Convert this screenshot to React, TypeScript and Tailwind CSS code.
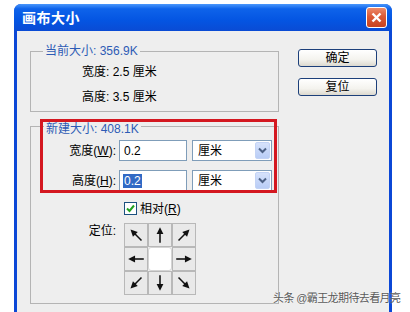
import { ReactNode } from "react"

const font = { fontFamily: '"Liberation Sans", "Noto Sans CJK SC", sans-serif' }

// arrow pointing right, rotated by angle around the cell centre
function Arrow({ angle }: { angle: number }) {
  return (
    <svg width="22" height="22" viewBox="0 0 24 24">
      <g transform={`rotate(${angle} 12 12)`}>
        <line x1="3.5" y1="12" x2="15" y2="12" stroke="#111" strokeWidth="1.7" />
        <polygon points="20.5,12 13,8.3 13,15.7" fill="#111" />
      </g>
    </svg>
  )
}

function Cell({ children, center }: { children?: ReactNode; center?: boolean }) {
  return (
    <div
      className={
        center
          ? "w-[24px] h-[24px] bg-white border border-[#d4d4d4] rounded-[3px]"
          : "w-[24px] h-[24px] bg-[#e9e9e9] border border-[#b8b8b8] flex items-center justify-center"
      }
    >
      {children}
    </div>
  )
}

function UnitSelect() {
  return (
    <div className="ml-[5px] w-[80px] h-[21px] bg-white border border-[#7f9db9] flex items-center">
      <span className="pl-[5px] flex-1 text-[12px] text-black leading-[14px]">厘米</span>
      <div className="mr-[1px] w-[15px] h-[17px] rounded-[2px] bg-[linear-gradient(180deg,#d6e2fb_0%,#b9cdf6_100%)] border border-[#c3d3f5] flex items-center justify-center">
        <svg width="9" height="7" viewBox="0 0 9 7">
          <polyline points="1,1.5 4.5,5 8,1.5" fill="none" stroke="#4d6185" strokeWidth="2" />
        </svg>
      </div>
    </div>
  )
}

function XpButton({ label }: { label: string }) {
  return (
    <div className="w-[79px] h-[18px] rounded-[3px] border border-[#1c3f7a] bg-[linear-gradient(180deg,#ffffff_0%,#f4f3ee_60%,#dcd9cf_100%)] flex items-center justify-center text-[12px] leading-[14px] text-black">
      {label}
    </div>
  )
}

export default function App() {
  return (
    <div className="relative w-[410px] h-[312px] bg-white overflow-hidden pl-[14px] pt-[4px]" style={font}>
      <div className="w-[378px] h-[320px] rounded-t-[7px] bg-[#0b47d6] flex flex-col">
        {/* title bar */}
        <div className="h-[27px] rounded-t-[7px] bg-[linear-gradient(180deg,#4a97fb_0%,#0e63ea_18%,#0455e2_60%,#0a4bd4_100%)] flex items-center pl-[8px] pr-[5px]">
          <span className="flex-1 text-[14px] font-bold text-white leading-[16px] tracking-[0.5px]">画布大小</span>
          <div className="w-[21px] h-[21px] rounded-[3px] border border-white bg-[linear-gradient(180deg,#ec8a6a_0%,#dc5a36_45%,#c8421f_100%)] flex items-center justify-center">
            <svg width="11" height="11" viewBox="0 0 11 11">
              <line x1="1.5" y1="1.5" x2="9.5" y2="9.5" stroke="white" strokeWidth="2.4" />
              <line x1="9.5" y1="1.5" x2="1.5" y2="9.5" stroke="white" strokeWidth="2.4" />
            </svg>
          </div>
        </div>

        {/* body */}
        <div className="mx-[3px] flex-1 bg-[#eeeeee] flex pl-[13px] pt-[20px]">
          <div className="w-[249px] flex flex-col gap-[14px]">
            {/* current size */}
            <div className="relative h-[61px] border border-[#b4b4b4] pt-[13px] pl-[51px] flex flex-col gap-[11px] text-[12px] leading-[14px] text-black">
              <span className="absolute -top-[8px] left-[12px] px-[2px] bg-[#eeeeee] text-[#2d5bb5]">当前大小: 356.9K</span>
              <div className="h-[14px]">宽度: 2.5 厘米</div>
              <div className="h-[14px]">高度: 3.5 厘米</div>
            </div>

            {/* new size */}
            <div className="relative h-[178px] border border-[#b4b4b4] pt-[13px] flex flex-col text-[12px] leading-[14px] text-black">
              <span className="absolute -top-[5px] left-[13px] px-[2px] bg-[#eeeeee] text-[#2d5bb5]">新建大小: 408.1K</span>
              <div className="h-[21px] flex items-center">
                <span className="w-[85px] text-right">
                  宽度(<span className="underline">W</span>):
                </span>
                <div className="ml-[3px] w-[68px] h-[21px] bg-white border border-[#7f9db9] flex items-center pl-[4px]">0.2</div>
                <UnitSelect />
              </div>
              <div className="mt-[9px] h-[21px] flex items-center">
                <span className="w-[85px] text-right">
                  高度(<span className="underline">H</span>):
                </span>
                <div className="ml-[3px] w-[68px] h-[21px] bg-white border border-[#7f9db9] flex items-center pl-[3px]">
                  <span className="bg-[#316ac5] text-white px-[1px]">0.2</span>
                </div>
                <UnitSelect />
              </div>
              <div className="mt-[11px] h-[13px] flex items-center pl-[93px]">
                <div className="w-[13px] h-[13px] bg-white border border-[#1c5180] flex items-center justify-center">
                  <svg width="9" height="9" viewBox="0 0 9 9">
                    <polyline points="1,4.5 3.5,7 8,1.5" fill="none" stroke="#21a121" strokeWidth="2" />
                  </svg>
                </div>
                <span className="ml-[3px]">
                  相对(<span className="underline">R</span>)
                </span>
              </div>
              <div className="mt-[8px] flex">
                <span className="w-[85px] text-right pt-[1px]">定位:</span>
                <div className="ml-[8px] grid grid-cols-3">
                  <Cell><Arrow angle={-135} /></Cell>
                  <Cell><Arrow angle={-90} /></Cell>
                  <Cell><Arrow angle={-45} /></Cell>
                  <Cell><Arrow angle={180} /></Cell>
                  <Cell center />
                  <Cell><Arrow angle={0} /></Cell>
                  <Cell><Arrow angle={135} /></Cell>
                  <Cell><Arrow angle={90} /></Cell>
                  <Cell><Arrow angle={45} /></Cell>
                </div>
              </div>
            </div>
          </div>

          {/* buttons */}
          <div className="ml-[19px] -mt-[2px] flex flex-col gap-[11px]">
            <XpButton label="确定" />
            <XpButton label="复位" />
          </div>
        </div>
      </div>

      {/* annotation */}
      <div className="absolute left-[40px] top-[119px] w-[237px] h-[74px] border-[3px] border-[#d41820]" />

      {/* watermark */}
      <span className="absolute left-[273px] top-[291px] text-[11px] leading-[14px] tracking-[-0.6px] text-[#5a5a5a] [text-shadow:0_0_2px_#ffffff]">
        头条 @霸王龙期待去看月亮
      </span>
    </div>
  )
}
